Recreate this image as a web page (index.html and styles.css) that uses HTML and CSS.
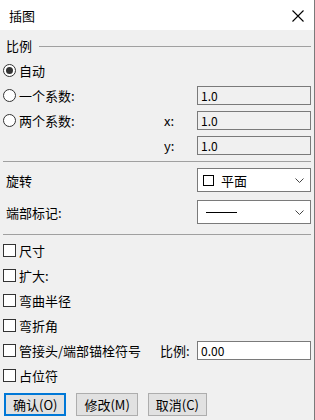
FILE: index.html
```html
<!DOCTYPE html>
<html lang="zh-CN">
<head>
    <meta charset="UTF-8">
    <meta name="viewport" content="width=device-width, initial-scale=1.0">
    <title>插图</title>
    <link rel="stylesheet" href="styles.css">
</head>
<body>
    <div class="dialog">
        <div class="titlebar">
            <span class="title">插图</span>
            <svg class="close" width="12" height="12" viewBox="0 0 12 12">
                <path d="M0.5 0.5 L11.5 11.5 M11.5 0.5 L0.5 11.5" stroke="#000" stroke-width="1.1" fill="none"/>
            </svg>
        </div>

        <div class="content">
            <div class="group-head">
                <span>比例</span>
                <div class="group-line"></div>
            </div>

            <div class="row">
                <span class="radio checked"></span>
                <span class="label">自动</span>
            </div>
            <div class="row">
                <span class="radio"></span>
                <span class="label">一个系数:</span>
                <span class="axis"></span>
                <div class="field disabled">1.0</div>
            </div>
            <div class="row">
                <span class="radio"></span>
                <span class="label">两个系数:</span>
                <span class="axis">x:</span>
                <div class="field disabled">1.0</div>
            </div>
            <div class="row">
                <span class="radio-space"></span>
                <span class="label"></span>
                <span class="axis">y:</span>
                <div class="field disabled">1.0</div>
            </div>

            <div class="separator"></div>

            <div class="combos">
                <div class="combo-row">
                    <span class="label">旋转</span>
                    <div class="combo">
                        <span class="combo-box"></span>
                        <span class="combo-text">平面</span>
                        <svg class="chevron" width="9" height="5" viewBox="0 0 9 5">
                            <path d="M0.5 0.5 L4.5 4.5 L8.5 0.5" stroke="#444" fill="none"/>
                        </svg>
                    </div>
                </div>
                <div class="combo-row">
                    <span class="label">端部标记:</span>
                    <div class="combo">
                        <span class="combo-line"></span>
                        <svg class="chevron" width="9" height="5" viewBox="0 0 9 5">
                            <path d="M0.5 0.5 L4.5 4.5 L8.5 0.5" stroke="#444" fill="none"/>
                        </svg>
                    </div>
                </div>
            </div>

            <div class="separator second"></div>

            <div class="checks">
                <div class="row"><span class="check"></span><span class="label">尺寸</span></div>
                <div class="row"><span class="check"></span><span class="label">扩大:</span></div>
                <div class="row"><span class="check"></span><span class="label">弯曲半径</span></div>
                <div class="row"><span class="check"></span><span class="label">弯折角</span></div>
                <div class="row">
                    <span class="check"></span>
                    <span class="label wide">管接头/端部锚栓符号</span>
                    <span class="ratio">比例:</span>
                    <div class="field">0.00</div>
                </div>
                <div class="row"><span class="check"></span><span class="label">占位符</span></div>
            </div>

            <div class="buttons">
                <button class="btn default">确认(O)</button>
                <button class="btn">修改(M)</button>
                <button class="btn">取消(C)</button>
            </div>
        </div>
    </div>
</body>
</html>
```

FILE: styles.css
```css
body {
    margin: 0;
    font-family: "Noto Sans CJK SC", "Noto Sans", sans-serif;
    font-size: 13px;
    color: #000;
    background: #f0f0f0;
}
.dialog {
    width: 315px;
    height: 420px;
    box-sizing: border-box;
    border-right: 1px solid #7a7a7a;
    background: #f0f0f0;
}
.titlebar {
    height: 30px;
    background: #fff;
    display: flex;
    align-items: center;
    justify-content: space-between;
    padding: 0 10px 0 9px;
}
.close {
    margin-top: 1px;
}
.content {
    padding: 3px 3px 0 3px;
}
.group-head {
    height: 25px;
    display: flex;
    align-items: center;
    padding-left: 3px;
}
.group-line {
    flex: 1;
    height: 1px;
    background: #a0a0a0;
    margin-left: 7px;
    margin-top: 1px;
}
.row {
    height: 25px;
    display: flex;
    align-items: center;
}
.radio,
.radio-space {
    width: 13px;
    height: 13px;
    flex: none;
    margin-right: 3px;
}
.radio {
    box-sizing: border-box;
    border: 1px solid #333;
    border-radius: 50%;
    background: #fff;
    position: relative;
}
.radio.checked::after {
    content: "";
    position: absolute;
    left: 2px;
    top: 2px;
    width: 7px;
    height: 7px;
    border-radius: 50%;
    background: #333;
}
.label {
    width: 145px;
    flex: none;
}
.axis {
    width: 33px;
    flex: none;
}
.field {
    width: 114px;
    height: 19px;
    box-sizing: border-box;
    border: 1px solid #7a7a7a;
    background: #fff;
    padding-left: 3px;
    display: flex;
    align-items: center;
    font-size: 12px;
}
.field.disabled {
    background: #f0f0f0;
}
.separator {
    height: 1px;
    background: #a0a0a0;
    margin-top: 3px;
}
.separator.second {
    margin-top: 10px;
}
.combos {
    padding-top: 6px;
    display: flex;
    flex-direction: column;
    gap: 8px;
}
.combo-row {
    height: 24px;
    display: flex;
    align-items: center;
    padding-left: 3px;
}
.combo-row .label {
    width: 191px;
}
.combo {
    width: 114px;
    height: 24px;
    box-sizing: border-box;
    border: 1px solid #7a7a7a;
    background: #fff;
    display: flex;
    align-items: center;
    padding-left: 5px;
    position: relative;
}
.combo-box {
    width: 11px;
    height: 11px;
    box-sizing: border-box;
    border: 1px solid #000;
    margin-right: 7px;
}
.combo-line {
    width: 31px;
    height: 1px;
    background: #000;
    margin-left: 3px;
}
.chevron {
    position: absolute;
    right: 6px;
    top: 9px;
}
.checks {
    padding-top: 3px;
}
.check {
    width: 13px;
    height: 13px;
    box-sizing: border-box;
    border: 1px solid #333;
    background: #fff;
    flex: none;
    margin-right: 3px;
}
.checks .label {
    width: auto;
}
.checks .label.wide {
    width: 141px;
}
.ratio {
    width: 37px;
    flex: none;
}
.buttons {
    display: flex;
    gap: 10px;
    margin-top: 5px;
    padding-left: 1px;
}
.btn {
    height: 23px;
    padding: 0 7px;
    font-family: inherit;
    font-size: 13px;
    color: #000;
    background: #e1e1e1;
    border: 1px solid #adadad;
    border-radius: 0;
}
.btn.default {
    border: 2px solid #0078d7;
    padding: 0 7px;
}
```
